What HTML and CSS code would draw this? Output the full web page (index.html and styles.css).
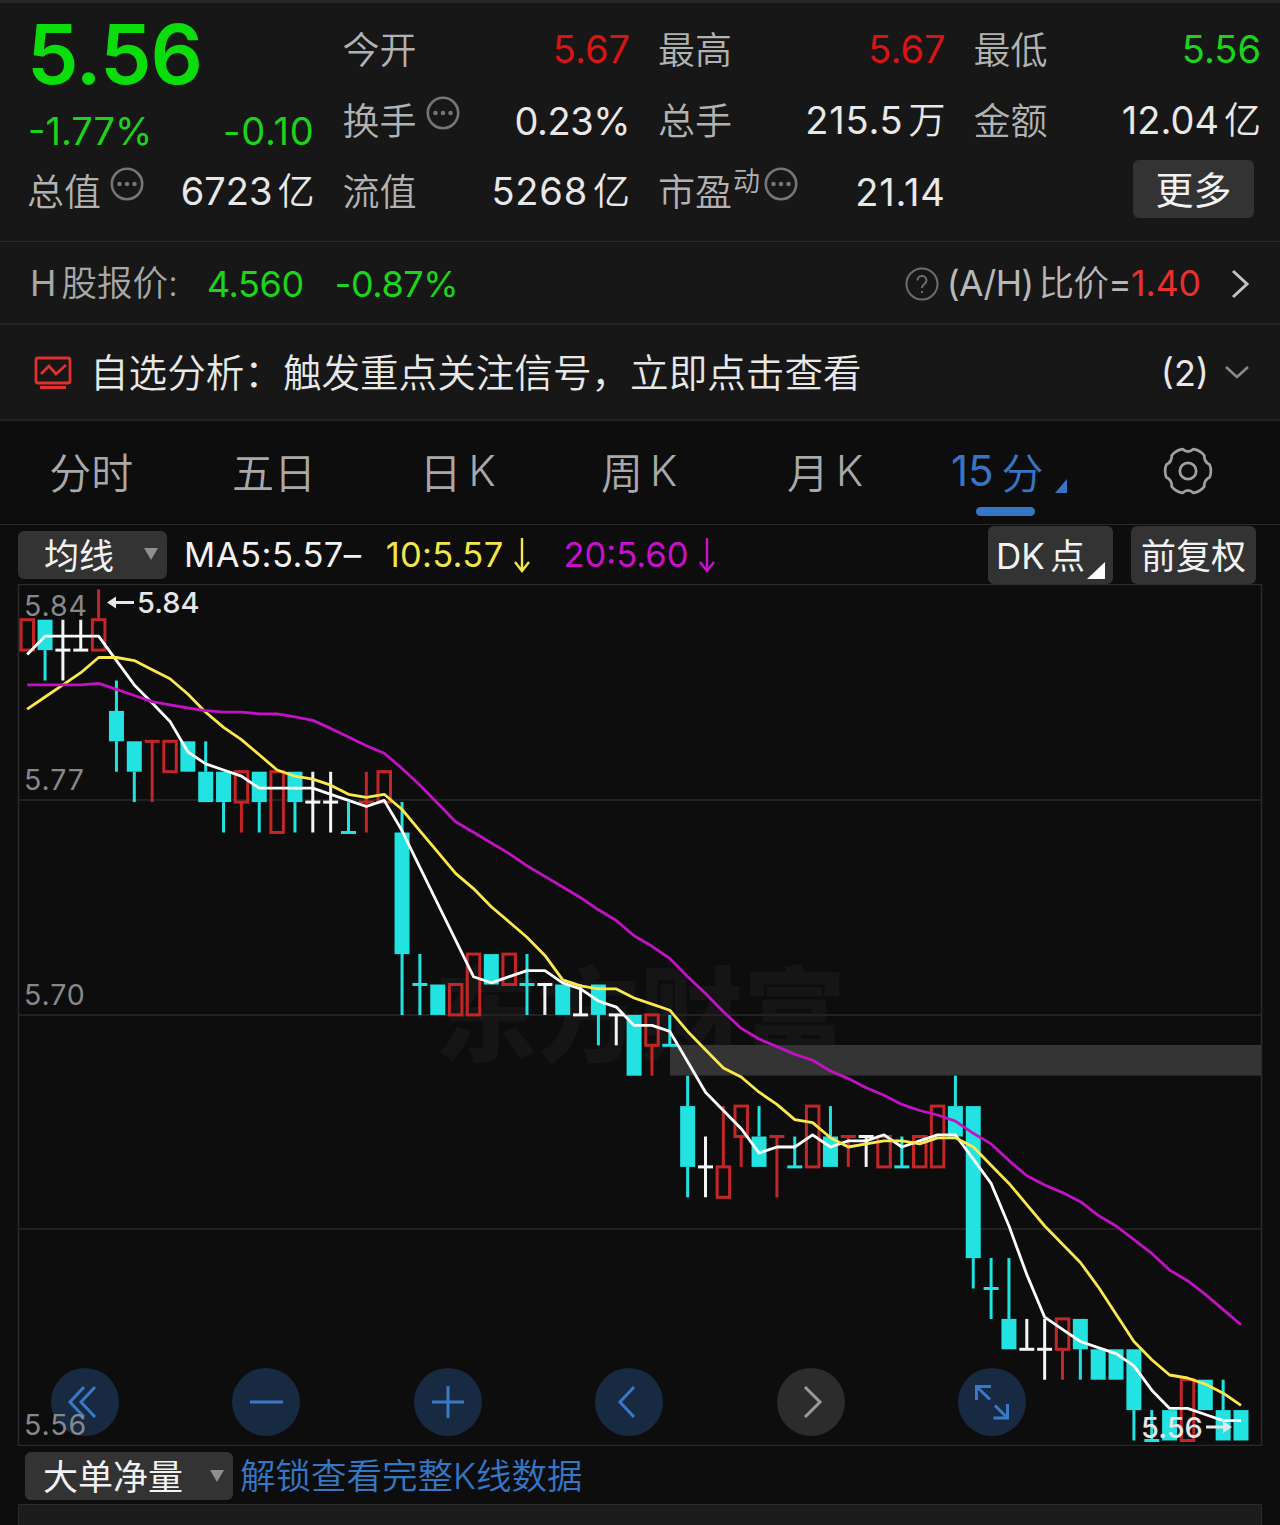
FILE: index.html
```
<!DOCTYPE html>
<html lang="zh-CN">
  <head>
    <meta charset="UTF-8" />
    <title>15分 K线</title>
    <link rel="stylesheet" href="styles.css">
  </head>
  <body>
    <!-- Quote -->
    <section class="quote">
      <div class="price-block">
        <div class="price">5.56</div>
        <div class="change"><span>-1.77%</span><span class="wide">-0.10</span></div>
      </div>
      <div class="cell"><label>今开</label><b class="red">5.67</b></div>
      <div class="cell"><label>最高</label><b class="red">5.67</b></div>
      <div class="cell"><label>最低</label><b class="green">5.56</b></div>
      <div class="cell">
        <label>换手</label>
        <svg class="dots" viewBox="0 0 34 34"><circle cx="17" cy="17" r="15.2" /><path d="M9.5 17h.01M17 17h.01M24.500 17h.01" /></svg>
        <b class="percent">0.23%</b>
      </div>
      <div class="cell"><label>总手</label><b class="wide">215.5<i>万</i></b></div>
      <div class="cell"><label>金额</label><b>12.04<i>亿</i></b></div>
      <div class="cell">
        <label>总值</label>
        <svg class="dots" viewBox="0 0 34 34"><circle cx="17" cy="17" r="15.2" /><path d="M9.5 17h.01M17 17h.01M24.500 17h.01" /></svg>
        <b>6723<i>亿</i></b>
      </div>
      <div class="cell"><label>流值</label><b class="wide">5268<i>亿</i></b></div>
      <div class="cell">
        <label>市盈</label><small>动</small>
        <svg class="dots tight" viewBox="0 0 34 34"><circle cx="17" cy="17" r="15.2" /><path d="M9.5 17h.01M17 17h.01M24.500 17h.01" /></svg>
        <b class="wide">21.14</b>
      </div>
      <div class="cell"><button class="more">更多</button></div>
    </section>

    <!-- H share -->
    <section class="hshare">
      <span class="h-label">H<i>股报价:</i></span>
      <span class="h-price">4.560</span>
      <span class="h-change">-0.87%</span>
      <svg class="help" viewBox="0 0 34 34"><circle cx="17" cy="17" r="15.500" /><path d="M12.500 13.500c0-6 9-6 9 0 0 3.500-4.500 3.500-4.500 7.500M17 24v2" /></svg>
      <span class="ratio">(A/H)<i>比价</i>=</span><span class="ratio-value">1.40</span>
      <svg class="arrow-right" viewBox="0 0 20 32"><path d="M3 3l14 13L3 29" /></svg>
    </section>

    <!-- Signal -->
    <section class="signal">
      <svg class="signal-icon" viewBox="0 0 38 34"><rect x="2" y="2" width="34" height="25" rx="2" /><path d="M7 18l8-8 7 8L32 9M6 31.500h26" /></svg>
      <span class="signal-text">自选分析：触发重点关注信号，立即点击查看</span>
      <span class="count">(2)</span>
      <svg class="arrow-down" viewBox="0 0 26 16"><path d="M2 2l11 10L24 2" /></svg>
    </section>

    <!-- Tabs -->
    <nav class="tabs">
      <span class="tab">分时</span>
      <span class="tab">五日</span>
      <span class="tab tab-day">日<i>K</i></span>
      <span class="tab tab-week">周<i>K</i></span>
      <span class="tab tab-month">月<i>K</i></span>
      <span class="tab active">15<i>分</i><em class="corner"></em></span>
      <span class="tab tab-set">
        <svg class="gear" viewBox="-26 -26 52 52">
          <path d="M22.600 6.500Q16.500 9.500 16.900 16.300Q12.500 21.700 5.700 22.800Q0 17.500 -5.700 22.800Q-12.500 21.700 -16.900 16.300Q-16.500 9.500 -22.600 6.500Q-25 0 -22.600 -6.500Q-16.500 -9.500 -16.900 -16.300Q-12.500 -21.700 -5.700 -22.800Q0 -17.500 5.700 -22.800Q12.500 -21.700 16.900 -16.300Q16.500 -9.500 22.600 -6.500Q25 0 22.600 6.500Z" />
          <circle r="8.500" />
        </svg>
      </span>
    </nav>

    <!-- Moving averages -->
    <section class="ma-bar">
      <button class="select ma-select">均线<em></em></button>
      <span class="ma5">MA5:5.57–</span>
      <span class="ma10">10:5.57</span>
      <svg class="down yellow" viewBox="0 0 18 36"><path d="M9 1v33M2 25l7 9 7-9" /></svg>
      <span class="ma20">20:5.60</span>
      <svg class="down magenta" viewBox="0 0 18 36"><path d="M9 1v33M2 25l7 9 7-9" /></svg>
      <button class="opt dk">DK<i>点</i><em></em></button>
      <button class="opt">前复权</button>
    </section>

    <!-- K line chart -->
    <section class="chart">
      <svg id="kline" viewBox="0 0 1280 862"></svg>
      <div class="controls">
        <button class="ctl"><svg viewBox="0 0 68 68"><path d="M33 19L19 34l14 15M44 19L30 34l14 15" /></svg></button>
        <button class="ctl"><svg viewBox="0 0 68 68"><path d="M18 34h33" /></svg></button>
        <button class="ctl"><svg viewBox="0 0 68 68"><path d="M18 34h32M34 18v32" /></svg></button>
        <button class="ctl"><svg viewBox="0 0 68 68"><path d="M39 19L25 34l14 15" /></svg></button>
        <button class="ctl off"><svg viewBox="0 0 68 68"><path d="M28 19l15 15-15 15" /></svg></button>
        <button class="ctl"><svg viewBox="0 0 68 68"><path d="M18.500 32V18.500H33M19 19l13 12.500M49.500 36v14H35.500M49 49.500L37 37.500" /></svg></button>
      </div>
      <span class="scale s1">5.84</span>
      <span class="scale s2">5.77</span>
      <span class="scale s3">5.70</span>
      <span class="scale s4">5.56</span>
    </section>

    <!-- Sub chart -->
    <section class="sub-bar">
      <button class="select sub-select">大单净量<em></em></button>
      <a class="unlock">解锁查看完整K线数据</a>
    </section>
    <section class="sub-chart"></section>

    <script src="script.js"></script>
  </body>
</html>
```
FILE: styles.css
```
* {
  box-sizing: border-box;
}
body {
  margin: 0;
  width: 1280px;
  height: 1525px;
  overflow: hidden;
  background: #0d0d0d;
  color: #e8e8e8;
  font-family: Inter, "Noto Sans CJK SC", sans-serif;
}
i,
em {
  font-style: normal;
}
svg {
  display: block;
  flex: none;
  fill: none;
}
button {
  border: none;
  padding: 0;
  color: #f2f2f2;
  font-family: inherit;
  background: #333334;
}

/* quote */
.quote {
  height: 242px;
  padding: 10px 19px 0 28px;
  border-top: 3px solid #262627;
  border-bottom: 1px solid #29292a;
  background: #171717;
  display: grid;
  grid-template-columns: repeat(4, 286.5px);
  grid-template-rows: 72px 71px 71px;
  column-gap: 29px;
}
.price-block {
  grid-row: span 2;
}
.price {
  height: 83px;
  line-height: 84px;
  margin-left: -1px;
  font-size: 82px;
  font-weight: 600;
  letter-spacing: -1px;
  color: #0bdc0b;
}
.change {
  display: flex;
  justify-content: space-between;
  line-height: 70px;
  font-size: 38px;
  color: #1bd41b;
}
.cell {
  display: flex;
  align-items: center;
}
.cell label {
  padding-top: 3px;
  margin-left: -1px;
  font-size: 37px;
  line-height: 60px;
  color: #b2b2b2;
  font-weight: 350;
}
.cell small {
  font-size: 27px;
  line-height: 30px;
  margin-bottom: 20px;
  margin-left: 1px;
  color: #b2b2b2;
  font-weight: 350;
}
.cell b {
  margin-left: auto;
  font-size: 38px;
  line-height: 60px;
  font-weight: 400;
  white-space: nowrap;
}
.cell b i {
  margin-left: 5px;
  font-size: 37px;
  font-weight: 350;
}
.cell .wide,
.change .wide {
  letter-spacing: 0.8px;
}
.cell .wide i {
  letter-spacing: 0;
}
.cell .percent {
  letter-spacing: -0.5px;
}
.dots {
  width: 34px;
  height: 34px;
  margin: 0 0 16px 9px;
  stroke: #757575;
  stroke-width: 2.6;
}
.dots.tight {
  margin-left: 4px;
}
.dots path {
  stroke-width: 4.6;
  stroke-linecap: round;
}
.cell .red {
  color: #d91414;
}
.cell .green {
  color: #1bd41b;
}
.more {
  width: 121px;
  height: 58px;
  margin: 0 7px 6px auto;
  padding-top: 3px;
  border-radius: 6px;
  font-size: 38px;
  line-height: 54px;
}

/* h share */
.hshare {
  height: 83px;
  padding: 2px 30px 0;
  border-bottom: 2px solid #222223;
  background: #171717;
  display: flex;
  align-items: center;
  font-size: 35.5px;
  line-height: 60px;
  color: #a8a8a8;
}
.hshare i {
  margin-left: 5px;
  font-weight: 350;
}
.h-price,
.h-change {
  color: #1bd41b;
  font-size: 36px;
  letter-spacing: -0.4px;
}
.h-price {
  margin-left: 29px;
}
.h-change {
  margin-left: 31px;
}
.help {
  width: 34px;
  height: 34px;
  margin-left: auto;
  margin-right: 8px;
  stroke: #6c6c6c;
  stroke-width: 2;
}
.ratio {
  color: #b8b8b8;
  letter-spacing: -0.7px;
}
.ratio-value {
  color: #e83030;
}
.arrow-right {
  width: 20px;
  height: 32px;
  margin-left: 29px;
  stroke: #c2c2c2;
  stroke-width: 3;
}

/* signal */
.signal {
  height: 96px;
  padding: 1px 30px 0 34px;
  border-bottom: 2px solid #222223;
  background: #171717;
  display: flex;
  align-items: center;
  font-size: 38.6px;
  line-height: 60px;
}
.signal-icon {
  width: 38px;
  height: 34px;
  margin-right: 18px;
  stroke: #e03030;
  stroke-width: 2.8;
}
.signal-text {
  padding-top: 1px;
  font-weight: 350;
}
.count {
  margin-left: auto;
  font-size: 36px;
}
.arrow-down {
  width: 26px;
  height: 16px;
  margin-left: 15px;
  stroke: #8a8a8a;
  stroke-width: 2.6;
}

/* tabs */
.tabs {
  height: 104px;
  padding: 0 2px 4px 0;
  border-bottom: 1px solid #29292a;
  display: flex;
  align-items: stretch;
}
.tab {
  flex: none;
  width: 182.6px;
  display: flex;
  align-items: center;
  justify-content: center;
  font-size: 42px;
  font-weight: 350;
  color: #a9a9a9;
}
.tab i {
  margin-left: 7px;
}
.tab-day {
  padding-left: 2px;
}
.tab-month {
  padding-left: 7px;
}
.tab-set {
  padding-left: 2px;
}
.active {
  position: relative;
  padding-right: 14px;
  color: #3577c5;
  font-weight: 400;
}
.active i {
  margin-left: 8px;
  font-weight: 350;
}
.active::after {
  content: "";
  position: absolute;
  left: 63px;
  bottom: 4px;
  width: 59px;
  height: 9px;
  border-radius: 5px;
  background: #3577c5;
}
.corner {
  position: absolute;
  left: 142px;
  bottom: 27px;
  border-left: 12px solid transparent;
  border-bottom: 14px solid #3577c5;
}
.gear {
  width: 50px;
  height: 50px;
  stroke: #a0a0a0;
  stroke-width: 2.8;
  stroke-linejoin: round;
}

/* averages */
.ma-bar {
  height: 59px;
  padding: 0 24px 0 18px;
  display: flex;
  align-items: center;
  font-size: 34.5px;
  line-height: 50px;
  white-space: nowrap;
}
.select {
  height: 48px;
  padding-top: 2px;
  border-radius: 6px;
  display: flex;
  align-items: center;
  justify-content: space-between;
  font-size: 35px;
  line-height: 46px;
}
.select em {
  margin-bottom: 3px;
  border: 7px solid transparent;
  border-top: 12px solid #8f8f90;
  border-bottom: 0;
}
.ma-select {
  width: 149px;
  padding: 2px 9px 0 26px;
}
.ma5 {
  margin-left: 17px;
  letter-spacing: 0.5px;
  color: #f2f2f2;
}
.ma10 {
  margin-left: 24px;
  letter-spacing: 0.3px;
  color: #f3e64a;
}
.ma20 {
  margin-left: 32px;
  color: #cb0fcb;
}
.down {
  width: 18px;
  height: 36px;
  margin-left: 10px;
  stroke-width: 2.4;
}
.yellow {
  stroke: #f3e64a;
}
.magenta {
  stroke: #cb0fcb;
}
.opt {
  position: relative;
  width: 125px;
  height: 58px;
  padding-top: 2px;
  border-radius: 6px;
  margin-left: 18px;
  font-size: 35px;
  line-height: 54px;
}
.dk {
  margin-left: auto;
  padding-right: 20px;
}
.dk i {
  margin-left: 5px;
}
.dk em {
  position: absolute;
  right: 8px;
  bottom: 5px;
  border-left: 18px solid transparent;
  border-bottom: 17px solid #fff;
}

/* chart */
.chart {
  position: relative;
  height: 862px;
}
#kline {
  width: 1280px;
  height: 862px;
}
.frame {
  stroke: #2a2a2b;
  stroke-width: 1.5;
}
.grid {
  stroke: #222223;
  stroke-width: 2;
}
.gap {
  fill: #343434;
}
.watermark {
  fill: #151516;
  font-family: "Noto Sans CJK SC", sans-serif;
  font-size: 103px;
  font-weight: 900;
}
.up {
  stroke: #c32626;
  stroke-width: 3;
}
.fall {
  stroke: #22e2e2;
  stroke-width: 3;
}
.fall-body {
  fill: #22e2e2;
}
.flat {
  stroke: #f5f5f5;
  stroke-width: 3;
}
.line5,
.line10,
.line20 {
  stroke-width: 2.8;
  stroke-linejoin: round;
}
.line5 {
  stroke: #fff;
}
.line10 {
  stroke: #fbe94e;
}
.line20 {
  stroke: #c212c4;
}
.mark {
  fill: #e6e6e6;
  font-size: 29px;
  font-weight: 500;
}
.mark-arrow {
  stroke: #e6e6e6;
  stroke-width: 3;
}
.mark-head {
  fill: #e6e6e6;
}
.scale {
  position: absolute;
  left: 24px;
  font-size: 28.5px;
  line-height: 30px;
  letter-spacing: 0.9px;
  color: #88888a;
}
.s1 {
  top: 7px;
}
.s2 {
  top: 181px;
}
.s3 {
  top: 396px;
}
.s4 {
  top: 826px;
}
.controls {
  position: absolute;
  left: 50.5px;
  top: 784px;
  display: flex;
  gap: 113.6px;
}
.ctl {
  width: 68px;
  height: 68px;
  border-radius: 50%;
  background: #182a42;
}
.ctl svg {
  stroke: #3a78c8;
  stroke-width: 3;
}
.ctl.off {
  background: #2c2c2d;
}
.ctl.off svg {
  stroke: #9a9a9a;
}

/* sub chart */
.sub-bar {
  height: 58px;
  padding: 2px 0 0 25px;
  display: flex;
  align-items: center;
}
.sub-select {
  width: 208px;
  padding: 2px 9px 0 18px;
}
.unlock {
  padding-top: 2px;
  margin-left: 7px;
  font-size: 35.5px;
  line-height: 46px;
  font-weight: 350;
  color: #3577c5;
}
.sub-chart {
  height: 30px;
  margin: 0 18px;
  border: 1px solid #2a2a2b;
  background: #1c1c1c;
}
```
FILE: script.js
```
// [type, high, body top, body bottom, low], in 0.01 steps below 5.84
const candles = [
  ["u", 1, 1, 2, 2], ["d", 1, 1, 2, 3], ["f", 1, 2, 2, 3], ["f", 1, 2, 2, 2],
  ["u", 0, 1, 2, 2], ["d", 3, 4, 5, 6], ["d", 5, 5, 6, 7], ["u", 5, 5, 5, 7],
  ["u", 5, 5, 6, 6], ["d", 5, 5, 6, 6], ["d", 5, 6, 7, 7], ["d", 6, 6, 7, 8],
  ["u", 6, 6, 7, 8], ["d", 6, 6, 7, 8], ["u", 6, 6, 8, 8], ["d", 6, 6, 7, 8],
  ["f", 6, 7, 7, 8], ["f", 6, 7, 7, 8], ["d", 7, 8, 8, 8], ["u", 6, 7, 7, 8],
  ["u", 6, 6, 7, 7], ["d", 7, 8, 12, 14], ["d", 12, 13, 13, 14], ["d", 13, 13, 14, 14],
  ["u", 13, 13, 14, 14], ["u", 12, 12, 14, 14], ["d", 12, 12, 13, 13], ["u", 12, 12, 13, 13],
  ["d", 12, 13, 13, 14], ["f", 13, 13, 13, 14], ["d", 13, 13, 14, 14], ["f", 13, 14, 14, 14],
  ["d", 13, 13, 14, 15], ["f", 14, 14, 14, 15], ["d", 14, 14, 16, 16], ["u", 14, 14, 15, 16],
  ["d", 14, 15, 15, 15], ["d", 16, 17, 19, 20], ["f", 18, 19, 19, 20], ["u", 17, 19, 20, 20],
  ["u", 17, 17, 18, 19], ["d", 17, 18, 19, 19], ["u", 18, 18, 18, 20], ["d", 18, 19, 19, 19],
  ["u", 17, 17, 19, 19], ["d", 17, 18, 19, 19], ["u", 18, 18, 18, 19], ["f", 18, 18, 18, 19],
  ["u", 18, 18, 19, 19], ["d", 18, 19, 19, 19], ["u", 18, 18, 19, 19], ["u", 17, 17, 19, 19],
  ["d", 16, 17, 18, 18], ["d", 17, 17, 22, 23], ["d", 22, 23, 23, 24], ["d", 22, 24, 25, 25],
  ["f", 24, 25, 25, 25], ["f", 24, 25, 25, 26], ["u", 24, 24, 25, 26], ["d", 24, 24, 25, 26],
  ["d", 25, 25, 26, 26], ["d", 25, 25, 26, 26], ["d", 25, 25, 27, 28], ["d", 27, 28, 28, 28],
  ["d", 27, 27, 28, 28], ["u", 26, 26, 28, 28], ["d", 26, 26, 27, 27], ["d", 26, 27, 28, 28],
  ["d", 27, 27, 28, 28],
];

// averages for the first bars, where the window starts before the chart
const head5 = [2.2, 1.6, 1.6, 1.6];
const head10 = [4, 3.6, 3.2, 2.8, 2.3, 2.3, 2.4, 2.7, 3];
const head20 = [3.2, 3.2, 3.2, 3.2, 3.15, 3.35, 3.55, 3.75, 3.86, 3.96,
  4.05, 4.1, 4.1, 4.15, 4.15, 4.25, 4.37, 4.63, 4.91];

const x = (i) => 27.2 + i * 17.85;
const y = (k) => 5.3 + k * 30.4;
const closes = candles.map((c) => (c[0] === "u" ? c[2] : c[3]));

function average(n, head) {
  return closes
    .map((_, i) => {
      let v = head[i];
      if (v === undefined) {
        v = closes.slice(i - n + 1, i + 1).reduce((a, b) => a + b, 0) / n;
      }
      return `${x(i).toFixed(1)},${(y(v) - 1.7).toFixed(1)}`;
    })
    .join(" ");
}

let out = `<text class="watermark" x="434" y="470">东方财富</text>`;
[216, 431, 645].forEach((gy) => {
  out += `<path class="grid" d="M19 ${gy}H1261" />`;
});
out += `<rect class="frame" x="18.500" y="0.500" width="1243" height="861" />`;
out += `<rect class="gap" x="670" y="461" width="591" height="30.500" />`;

candles.forEach(([type, high, top, bottom, low], i) => {
  const cx = x(i);
  const cls = { u: "up", d: "fall", f: "flat" }[type];
  out += `<path class="${cls}" d="M${cx} ${y(high)}V${y(top)}M${cx} ${y(bottom)}V${y(low)}" />`;
  if (top === bottom) {
    out += `<path class="${cls}" d="M${cx - 7.5} ${y(top)}h15" />`;
  } else if (type === "u") {
    out += `<rect class="up" x="${cx - 6.2}" y="${y(top)}" width="12.500" height="${y(bottom) - y(top)}" />`;
  } else {
    out += `<rect class="fall-body" x="${cx - 7.5}" y="${y(top)}" width="15" height="${y(bottom) - y(top)}" />`;
  }
});

out += `<polyline class="line5" points="${average(5, head5)}" />`;
out += `<polyline class="line10" points="${average(10, head10)}" />`;
out += `<polyline class="line20" points="${average(20, head20)}" />`;

// high and low marks
out += `<path class="mark-arrow" d="M114 18.500H134" /><path class="mark-head" d="M107 18.500l9-6v12z" />`;
out += `<text class="mark" x="137" y="29">5.84</text>`;
out += `<text class="mark" x="1141" y="854">5.56</text>`;
out += `<path class="mark-arrow" d="M1206 843H1225" /><path class="mark-head" d="M1232 843l-9-6v12z" />`;

document.getElementById("kline").innerHTML = out;
```
